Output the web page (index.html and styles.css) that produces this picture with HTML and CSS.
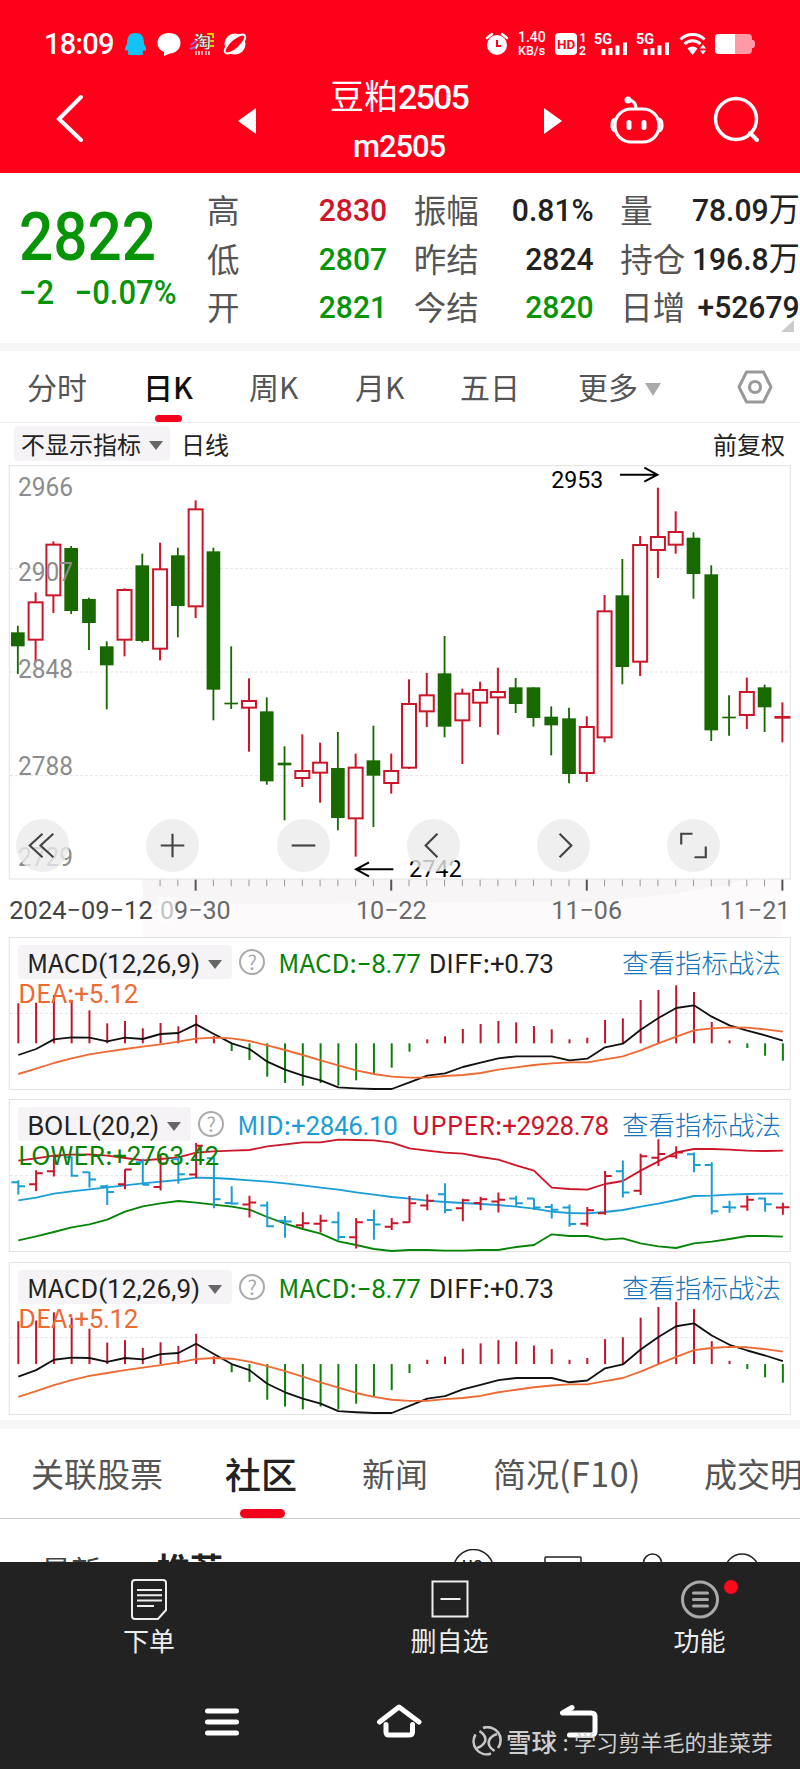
FILE: index.html
```html
<!DOCTYPE html>
<html lang="zh-CN">

<head>
    <meta charset="UTF-8">
    <meta name="viewport" content="width=device-width, initial-scale=1.0">
    <title>豆粕2505 - m2505</title>
    <link rel="stylesheet" href="styles.css">
</head>

<body>
    <header class="header">
        <div class="status-bar">
            <span class="clock">18:09</span>
            <svg class="status-left" width="130" height="30" viewBox="0 0 130 30">
                <path d="M6 15C6 7 9 4 14.500 4S23 7 23 15c2 3 2.500 5 1.500 7l-2-1-1 2.500c2 2 0 3-7 2.500-7 .5-9-.5-7-2.500L6.500 21l-2 1c-1-2-.5-4 1.500-7z" fill="#12c4f5"/>
                <path d="M48 4c7 0 11.500 4 11.500 10S55 24 49 24.500L43 27v-4c-4-1.500-6.500-5-6.500-9C36.500 8 41 4 48 4z" fill="#fff"/>
                <path d="M70 16l5-4M69 20l5-2" stroke="#a060e0" stroke-width="2"/>
                <path d="M86 5h6v4M89 12h4M89 17h4" fill="none" stroke="#ffc400" stroke-width="2"/>
                <text x="73" y="19" class="tao">淘</text>
                <path d="M75 22v4m3-4v4m3-4v4m4-4v4m3-4v4" stroke="#fff" stroke-width="1.300"/>
                <circle cx="114" cy="15" r="10.500" fill="#fff"/>
                <ellipse cx="114" cy="15" rx="13" ry="5" transform="rotate(-42 114 15)" fill="#ff001b" stroke="#fff" stroke-width="2"/>
            </svg>
            <span class="spacer"></span>
            <svg width="24" height="26" viewBox="0 0 24 26">
                <circle cx="12" cy="14" r="10" fill="#fff"/>
                <path d="M2 7l5-4M22 7l-5-4" stroke="#fff" stroke-width="2.500" stroke-linecap="round"/>
                <path d="M12 9v6h4" fill="none" stroke="#ff001b" stroke-width="2"/>
            </svg>
            <span class="speed">1.40<br><small>KB/s</small></span>
            <svg class="hd" width="34" height="26" viewBox="0 0 34 26">
                <rect x="1" y="2" width="22" height="22" rx="4" fill="#fff"/>
                <text x="3" y="18" class="hd-text">HD</text>
                <text x="25.500" y="11" class="hd-num">1</text>
                <text x="25" y="24" class="hd-num">2</text>
            </svg>
            <svg class="signal" width="34" height="26" viewBox="0 0 34 26">
                <text x="0" y="13" class="sig-text" textLength="18" lengthAdjust="spacingAndGlyphs">5G</text>
                <path d="M9.500 18v6M16.500 17v7M23.500 14.500v9.500M31 11.500v12.500" stroke="#fff" stroke-width="4"/>
            </svg>
            <svg class="signal" width="34" height="26" viewBox="0 0 34 26">
                <text x="0" y="13" class="sig-text" textLength="18" lengthAdjust="spacingAndGlyphs">5G</text>
                <path d="M9.500 18v6M16.500 17v7M23.500 14.500v9.500M31 11.500v12.500" stroke="#fff" stroke-width="4"/>
            </svg>
            <svg class="wifi" width="28" height="26" viewBox="0 0 28 26">
                <path d="M1.500 8.500a17 17 0 0 1 24 0M5.500 13a11.500 11.500 0 0 1 16 0" fill="none" stroke="#fff" stroke-width="3"/>
                <path d="M8.500 17.500a7 7 0 0 1 10 0L13.500 24z" fill="#fff"/>
                <path d="M21 17.500l3-4 3 4zM21 19.500l3 4 3-4z" fill="#fff"/>
            </svg>
            <svg width="40" height="22" viewBox="0 0 40 22">
                <rect x="0" y="1" width="37" height="20" rx="4" fill="#ff99a5"/>
                <path d="M37 7h1q2 0 2 4t-2 4h-1z" fill="#ff99a5"/>
                <path d="M4 1h16v20H4q-4 0-4-4V5q0-4 4-4z" fill="#fff"/>
            </svg>
        </div>
        <div class="nav-bar">
            <svg class="back" width="28" height="50" viewBox="0 0 28 50"><path d="M25 3L3 25l22 21" fill="none" stroke="#fff" stroke-width="4" stroke-linecap="round"/></svg>
            <svg class="prev" width="18" height="26" viewBox="0 0 18 26"><path d="M18 0v26L0 13z" fill="#fff"/></svg>
            <div class="title">
                <h1>豆粕<b>2505</b></h1>
                <p>m2505</p>
            </div>
            <svg class="next" width="18" height="26" viewBox="0 0 18 26"><path d="M0 0v26l18-13z" fill="#fff"/></svg>
            <svg class="robot" width="54" height="50" viewBox="0 0 54 50">
                <g fill="none" stroke="#fff" stroke-width="3.200">
                    <rect x="5" y="14" width="44" height="33" rx="16"/>
                    <path d="M5 24Q2 25 2 30t3 6M49 24q3 1 3 6t-3 6M26 14q0-8-7-9"/>
                </g>
                <circle cx="18" cy="5" r="3.500" fill="#fff"/>
                <path d="M19 27.500v5M34 27.500v5" stroke="#fff" stroke-width="5" stroke-linecap="round"/>
            </svg>
            <svg class="search" width="48" height="48" viewBox="0 0 48 48"><circle cx="23" cy="23" r="20.500" fill="none" stroke="#fff" stroke-width="3.500"/><path d="M37 37l7 7" stroke="#fff" stroke-width="4" stroke-linecap="round"/></svg>
        </div>
    </header>

    <section class="quote">
        <div class="price">
            <div class="last">2822</div>
            <div class="change"><span>−2</span><span>−0.07%</span></div>
        </div>
        <dl class="stats">
            <dt>高</dt><dd class="up">2830</dd>
            <dt>低</dt><dd class="down">2807</dd>
            <dt>开</dt><dd class="down">2821</dd>
        </dl>
        <dl class="stats">
            <dt>振幅</dt><dd>0.81%</dd>
            <dt>昨结</dt><dd>2824</dd>
            <dt>今结</dt><dd class="down">2820</dd>
        </dl>
        <dl class="stats">
            <dt>量</dt><dd>78.09<i>万</i></dd>
            <dt>持仓</dt><dd>196.8<i>万</i></dd>
            <dt>日增</dt><dd>+52679</dd>
        </dl>
        <span class="corner"></span>
    </section>

    <nav class="period-tabs">
        <a>分时</a>
        <a class="active">日K</a>
        <a>周K</a>
        <a>月K</a>
        <a>五日</a>
        <a>更多<span class="caret light"></span></a>
        <svg width="36" height="34" viewBox="0 0 36 34">
            <path d="M9.500 2h17L34 17l-7.500 15h-17L2 17z" fill="none" stroke="#999" stroke-width="3" stroke-linejoin="round"/>
            <circle cx="18" cy="17" r="5.500" fill="none" stroke="#999" stroke-width="3.200"/>
        </svg>
    </nav>

    <div class="chart-bar">
        <span class="chip">不显示指标<i class="caret"></i></span>
        <span>日线</span>
        <span class="adjust">前复权</span>
    </div>

    <div class="kline">
        <!-- all charts are drawn in 3x units, 2400 wide -->
        <svg id="kline" width="800" height="472" viewBox="0 14 2400 1416"></svg>
        <div class="controls">
            <button><svg viewBox="0 0 54 54"><path d="M27 15L14 27l13 12M38 15L25 27l13 12"/></svg></button>
            <button><svg viewBox="0 0 54 54"><path d="M15 27h24M27 15v24"/></svg></button>
            <button><svg viewBox="0 0 54 54"><path d="M15 27h24"/></svg></button>
            <button><svg viewBox="0 0 54 54"><path d="M31 15L19 27l12 12"/></svg></button>
            <button><svg viewBox="0 0 54 54"><path d="M23 15l12 12-12 12"/></svg></button>
            <button><svg viewBox="0 0 54 54"><path d="M14.500 26V15H26M39.500 28v11H28"/></svg></button>
        </div>
    </div>

    <section class="indicator">
        <svg id="macd1" width="800" height="153" viewBox="0 21 2400 459"></svg>
        <div class="legend">
            <span class="chip">MACD<b>(12,26,9)</b><i class="caret"></i></span>
            <span class="help">?</span>
            <span class="green">MACD:<b>−8.77</b></span>
            <span class="diff">DIFF:<b>+0.73</b></span>
            <a>查看指标战法</a>
        </div>
        <div class="legend-second orange">DEA:<b>+5.12</b></div>
    </section>

    <section class="indicator">
        <svg id="boll" width="800" height="153" viewBox="0 508 2400 459"></svg>
        <div class="legend">
            <span class="chip">BOLL<b>(20,2)</b><i class="caret"></i></span>
            <span class="help">?</span>
            <span class="blue">MID:<b>+2846.10</b></span>
            <span class="upper">UPPER:<b>+2928.78</b></span>
            <a>查看指标战法</a>
        </div>
        <div class="legend-second green">LOWER:<b>+2763.42</b></div>
    </section>

    <section class="indicator">
        <svg id="macd2" width="800" height="153" viewBox="0 21 2400 459"></svg>
        <div class="legend">
            <span class="chip">MACD<b>(12,26,9)</b><i class="caret"></i></span>
            <span class="help">?</span>
            <span class="green">MACD:<b>−8.77</b></span>
            <span class="diff">DIFF:<b>+0.73</b></span>
            <a>查看指标战法</a>
        </div>
        <div class="legend-second orange">DEA:<b>+5.12</b></div>
    </section>

    <nav class="content-tabs">
        <a>关联股票</a>
        <a class="active">社区</a>
        <a>新闻</a>
        <a>简况<span class="latin">(F10)</span></a>
        <a>成交明细</a>
    </nav>

    <div class="feed-tabs">
        <a>最新</a>
        <a class="active">推荐</a>
        <svg width="320" height="40" viewBox="0 0 320 40" fill="none" stroke="#222" stroke-width="1.500">
            <circle cx="23.500" cy="20.500" r="20"/>
            <text x="12" y="22" class="hq">HQ</text>
            <rect x="95" y="8" width="36" height="28" rx="1"/>
            <circle cx="202.500" cy="14" r="9"/>
            <circle cx="292" cy="22" r="17"/>
        </svg>
    </div>

    <footer class="footer">
        <div class="actions">
            <a>
                <svg width="40" height="44" viewBox="0 0 40 44" fill="none" stroke="#eee" stroke-width="2">
                    <path d="M6 3h28q3 0 3 3v27l-8 9H6q-3 0-3-3V6q0-3 3-3z"/>
                    <path d="M8 13h25M8 18.300h25M8 23.600h25M8 29h17"/>
                </svg>
                下单
            </a>
            <a>
                <svg width="40" height="44" viewBox="0 0 40 44" fill="none" stroke="#eee" stroke-width="2">
                    <rect x="2.500" y="4.500" width="35" height="35"/>
                    <path d="M10.500 22h20"/>
                </svg>
                删自选
            </a>
            <a>
                <svg width="40" height="44" viewBox="0 0 40 44" fill="none" stroke="#aaa" stroke-width="3">
                    <circle cx="20" cy="22.500" r="17.500"/>
                    <path d="M13.500 16h14M13.500 22.500h14M13.500 29h14" stroke-linecap="round"/>
                </svg>
                功能
                <span class="dot"></span>
            </a>
        </div>
        <div class="system-nav">
            <svg width="36" height="34" viewBox="0 0 36 34"><path d="M3.500 6h29M3.500 17h29M3.500 28h29"/></svg>
            <svg width="46" height="38" viewBox="0 0 46 38"><path d="M3.500 19L23 4l20 15M10 21.500V29q0 3 3 3h20q3.500 0 3.500-3v-7.500"/></svg>
            <svg width="42" height="38" viewBox="0 0 42 38"><path d="M14 4.500L4.500 10H33q4 0 4 3.500v15q0 3.500-4 3.500H11.500"/></svg>
        </div>
        <div class="watermark">
            <svg width="30" height="30" viewBox="0 0 30 30" fill="none" stroke="#c6c6c6" stroke-width="2.600">
                <path d="M11 2a13 13 0 0 1 15 20M19 27.500A13 13 0 0 1 3.500 8.500"/>
                <path d="M7.500 5Q15 10 13 15.500 11 20 5 22M22.500 25Q15 20 17 14.500 19 10 25 8"/>
            </svg>
            <b>雪球</b><i>:</i><span>学习剪羊毛的韭菜芽</span>
        </div>
    </footer>

    <script src="chart.js"></script>
</body>

</html>
```

FILE: styles.css
```css
* {
    margin: 0;
    padding: 0;
    box-sizing: border-box;
}

body {
    width: 800px;
    height: 1769px;
    overflow: hidden;
    background: #fff;
    color: #222;
    font-family: "Noto Sans CJK SC", sans-serif;
    font-weight: 400;
}

svg {
    display: block;
    flex-shrink: 0;
}

i {
    font-style: normal;
}

/* header */
.header {
    height: 173px;
    background: #ff001b;
    color: #fff;
}

.status-bar {
    display: flex;
    align-items: center;
    height: 88px;
    padding: 0 45px 0 44px;
}

.clock {
    width: 77px;
    font: 500 29px/30px Roboto, sans-serif;
    letter-spacing: -0.8px;
}

.tao {
    font: 700 17px "Noto Sans CJK SC", sans-serif;
    fill: #fff;
    stroke: #4b2a10;
    stroke-width: 0.4px;
}

.spacer {
    flex: 1;
}

.speed {
    margin-left: 9px;
    width: 29px;
    font: 500 14px/12.5px Roboto, sans-serif;
    white-space: nowrap;
}

.speed small {
    font-size: 12.5px;
}

.hd {
    margin-left: 7px;
}

.hd-text {
    font: 700 13.5px Roboto, sans-serif;
    fill: #ff001b;
}

.hd-num {
    font: 700 12px Roboto, sans-serif;
    fill: #fff;
}

.sig-text {
    font: 700 14px Roboto, sans-serif;
    fill: #fff;
}

.signal {
    margin-left: 6px;
    margin-right: 2px;
}

.wifi {
    margin: 0 8px 0 7px;
}

.nav-bar {
    display: flex;
    align-items: center;
    height: 62px;
}

.back {
    margin-left: 56px;
}

.prev {
    margin-left: 154px;
    margin-top: 3px;
}

.title {
    width: 288px;
    margin-top: 3px;
    padding-right: 2px;
    text-align: center;
}

.title h1 {
    font-weight: 400;
    font-size: 34px;
    line-height: 50px;
}

.title b {
    font: 500 34px/40px Roboto, sans-serif;
    letter-spacing: -1.8px;
}

.title p {
    padding-top: 3px;
    font: 500 31px/48px Roboto, sans-serif;
    letter-spacing: -1.1px;
}

.next {
    margin-top: 3px;
}

.robot {
    margin-left: 48px;
    margin-top: 2px;
}

.search {
    margin-left: 49px;
    margin-top: 2px;
}

/* quote */
.quote {
    position: relative;
    display: flex;
    gap: 28px;
    height: 178px;
    padding: 13px 0 0 20px;
    border-bottom: 8px solid #f6f6f6;
}

.price {
    width: 160px;
    color: #079407;
    white-space: nowrap;
}

.last {
    margin: 19px 0 0 -1px;
    font: 500 67px/64px Roboto, sans-serif;
    transform: scaleX(0.9);
    transform-origin: left;
}

.change {
    display: flex;
    gap: 22px;
    margin: 4px 0 0 -1px;
    font: 500 33px/40px Roboto, sans-serif;
    transform: scaleX(0.94);
    transform-origin: left;
}

.stats {
    display: grid;
    grid-template-columns: auto 1fr;
    grid-auto-rows: 48.5px;
    width: 179px;
    align-items: center;
    white-space: nowrap;
}

.stats dt {
    margin: -3px 0 0 -1px;
    font-size: 32.5px;
    color: #555;
}

.stats dd {
    text-align: right;
    font: 500 32px/48px Roboto, sans-serif;
    color: #222;
    transform: scaleX(0.94);
    transform-origin: right;
}

.stats i {
    font: 400 33px/40px "Noto Sans CJK SC", sans-serif;
}

.stats .up {
    color: #d0152b;
}

.stats .down {
    color: #079407;
}

.corner {
    position: absolute;
    left: 781px;
    top: 147px;
    border-left: 13px solid transparent;
    border-bottom: 12px solid #ccc;
}

/* period tabs */
.period-tabs {
    display: grid;
    grid-template-columns: 116px 106px 106px 105px 118px 159px auto;
    align-items: center;
    height: 72px;
    padding-left: 27px;
    border-bottom: 1px solid #eee;
    font-size: 30px;
    color: #555;
}

.period-tabs a {
    position: relative;
    height: 71px;
    line-height: 71px;
    white-space: nowrap;
}

.period-tabs .active {
    color: #111;
    font-weight: 500;
}

.period-tabs .active::after {
    content: "";
    position: absolute;
    left: 12px;
    bottom: 0;
    width: 27px;
    height: 7px;
    border-radius: 4px;
    background: #f5001b;
}

.caret {
    display: inline-block;
    margin-left: 8px;
    border: 7px solid transparent;
    border-top: 9px solid #666;
    border-bottom: 0;
    vertical-align: 4px;
}

.caret.light {
    margin-left: 7px;
    border-width: 13px 8px 0;
    border-top-color: #aaa;
    vertical-align: 3px;
}

.chart-bar {
    display: flex;
    align-items: center;
    height: 42px;
    padding: 0 15px 0 14px;
    font-size: 24px;
}

.chart-bar span {
    margin-top: -1px;
}

.chip {
    height: 35px;
    padding: 0 7px;
    border-radius: 4px;
    background: #f5f3f5;
    line-height: 35px;
    white-space: nowrap;
}

.chart-bar .chip {
    margin-right: 11px;
}

.chart-bar .adjust {
    margin-left: auto;
}

/* k line */
.kline {
    position: relative;
    height: 472px;
}

.controls {
    position: absolute;
    left: 16px;
    top: 354px;
    display: flex;
    gap: 77.3px;
}

.controls button {
    width: 53px;
    height: 53px;
    border: 0;
    border-radius: 50%;
    background: rgba(235, 235, 235, 0.8);
}

.controls path {
    fill: none;
    stroke: #444;
    stroke-width: 2.2;
}

.frame {
    fill: none;
    stroke: #e2e2e2;
    stroke-width: 3;
}

.grid {
    stroke: #e4e4e4;
    stroke-width: 3;
    stroke-dasharray: 9 6;
}

.candle-up {
    fill: #fff;
    stroke: #cc1529;
    stroke-width: 6;
}

.wick-down {
    stroke: #186a00;
    stroke-width: 5.5;
}

.candle-down {
    fill: #186a00;
}

.price-label {
    font: 400 78px Roboto, sans-serif;
    fill: #8c8c8c;
}

.date-label {
    font: 400 79px Roboto, sans-serif;
    fill: #6a6a6a;
}

.date-label.first {
    fill: #444;
}

.mark {
    font: 400 71px Roboto, sans-serif;
    fill: #000;
}

.arrow {
    fill: none;
    stroke: #000;
    stroke-width: 6;
}

.axis-shade {
    fill: #fcfafb;
}

.tick {
    stroke: #999;
    stroke-width: 3;
}

.tick-major {
    stroke: #555;
    stroke-width: 6;
}

/* indicators */
.indicator {
    position: relative;
    height: 153px;
    margin-bottom: 9.3px;
    padding-top: 8px;
    font-size: 26px;
    line-height: 34px;
}

.indicator > svg {
    position: absolute;
    left: 0;
    top: 0;
}

.legend {
    position: relative;
    display: flex;
    align-items: center;
    height: 34px;
    margin: 0 19px 0 18px;
    white-space: nowrap;
}

.legend .chip {
    height: 34px;
    padding: 0 10px 0 9px;
    line-height: 34px;
}

.indicator b {
    font: 400 26px/30px Roboto, sans-serif;
    letter-spacing: -0.35px;
}

.indicator .chip b {
    letter-spacing: 0.1px;
}

.help {
    width: 26px;
    height: 26px;
    margin: 0 13px 0 7px;
    border: 2px solid #aaa;
    border-radius: 50%;
    color: #aaa;
    font-size: 20px;
    line-height: 22px;
    text-align: center;
}

.diff {
    margin-left: 8px;
}

.upper {
    margin-left: 14px;
    color: #cc1529;
}

.legend a {
    margin-left: auto;
    font-size: 26.5px;
    font-weight: 300;
    color: #1474bd;
}

.legend-second {
    position: relative;
    margin: -4px 0 0 18px;
}

.green {
    color: #078407;
}

.orange {
    color: #ee6a33;
}

.blue {
    color: #1b9dd6;
}

.line {
    fill: none;
    stroke-width: 5.5;
    stroke-linejoin: round;
}

.bar-up {
    stroke: #c01530;
    stroke-width: 6;
}

.bar-down {
    stroke: #0a800a;
    stroke-width: 6;
}

.ohlc {
    fill: none;
    stroke-width: 6;
}

/* community */
.content-tabs {
    display: grid;
    grid-template-columns: 194px 137px 131px 211px 200px;
    height: 99px;
    margin-top: -4px;
    padding-left: 31px;
    border-top: 9px solid #f6f6f6;
    border-bottom: 1px solid #ccc;
    font-size: 33px;
    line-height: 88px;
    color: #555;
    white-space: nowrap;
    overflow: hidden;
}

.content-tabs .latin {
    font-size: 34px;
    letter-spacing: 0.5px;
}

.content-tabs .active {
    position: relative;
    color: #222;
    font-size: 36px;
    font-weight: 500;
}

.content-tabs .active::after {
    content: "";
    position: absolute;
    left: 15px;
    bottom: 0;
    width: 45px;
    height: 9px;
    border-radius: 5px;
    background: #f5001b;
}

.feed-tabs {
    display: flex;
    height: 43px;
    padding: 30px 0 0 41px;
    overflow: hidden;
    font-size: 30px;
    line-height: 44px;
    color: #444;
}

.feed-tabs a {
    margin-top: -2px;
}

.feed-tabs .active {
    margin: -3px 0 0 56px;
    font-size: 33px;
    font-weight: 700;
    color: #222;
}

.feed-tabs svg {
    margin-left: 227px;
}

.hq {
    font: 500 15px Roboto, sans-serif;
    fill: #222;
    stroke: none;
}

/* footer */
.footer {
    position: relative;
    height: 207px;
    background: #222;
    color: #eee;
}

.actions {
    display: grid;
    grid-template-columns: 298px 303px 197px;
    padding-top: 15px;
    font-size: 26px;
    line-height: 38px;
}

.actions a {
    position: relative;
    display: flex;
    flex-direction: column;
    align-items: center;
}

.dot {
    position: absolute;
    left: 123px;
    top: 3px;
    width: 14px;
    height: 14px;
    border-radius: 50%;
    background: #ff0a1c;
}

.system-nav {
    display: flex;
    align-items: center;
    gap: 136px;
    margin-top: 44px;
    padding-left: 204px;
    fill: none;
    stroke: #fff;
    stroke-width: 5;
    stroke-linecap: round;
    stroke-linejoin: round;
}

.watermark {
    position: absolute;
    left: 472px;
    top: 164px;
    display: flex;
    align-items: center;
    height: 30px;
    color: #cfcfcf;
    font-size: 22.1px;
    white-space: nowrap;
}

.watermark b {
    margin-left: 4px;
    font-size: 25.5px;
    font-weight: 500;
}

.watermark i {
    width: 17px;
    text-align: center;
}
```

FILE: chart.js
```javascript
const NS = 'http://www.w3.org/2000/svg';
const X0 = 53.5;
const STEP = 53.34;

// [direction, high, low, body top, body bottom]
const candles = [
    ['g', 496, 641, 516, 558], ['r', 396, 606, 426, 538], ['r', 243, 458, 253, 405], ['g', 257, 461, 263, 452],
    ['g', 412, 569, 416, 488], ['g', 543, 747, 558, 615], ['r', 384, 588, 389, 538], ['g', 280, 546, 315, 542],
    ['r', 247, 600, 327, 565], ['g', 262, 531, 285, 437], ['r', 120, 473, 147, 438], ['g', 262, 780, 273, 688],
    ['g', 558, 746, 727, 732], ['r', 654, 874, 722, 742], ['g', 711, 973, 753, 963], ['g', 858, 1080, 907, 915],
    ['r', 822, 980, 932, 953], ['r', 847, 1027, 907, 937], ['g', 815, 1110, 923, 1073], ['r', 880, 1189, 922, 1074],
    ['g', 796, 1100, 900, 946], ['r', 880, 1000, 932, 968], ['r', 657, 926, 731, 922], ['r', 638, 800, 705, 753],
    ['g', 527, 831, 639, 799], ['r', 685, 911, 700, 780], ['r', 664, 800, 689, 727], ['r', 622, 823, 695, 711],
    ['g', 653, 758, 681, 731], ['g', 681, 799, 681, 773], ['g', 738, 885, 769, 795], ['g', 742, 969, 774, 941],
    ['r', 768, 965, 800, 938], ['r', 404, 846, 453, 831], ['g', 296, 672, 405, 620], ['r', 227, 647, 254, 604],
    ['r', 82, 353, 230, 269], ['r', 153, 280, 215, 253], ['g', 216, 415, 232, 341], ['g', 315, 842, 342, 810],
    ['g', 705, 826, 769, 774], ['r', 652, 806, 695, 764], ['g', 673, 815, 681, 741], ['r', 726, 846, 770, 772]
];

const macdBars = [220, 218, 195, 210, 241, 280, 273, 295, 279, 289, 255, 318, 363, 390, 440, 459, 467, 459, 467, 451, 430, 413,
    365, 328, 319, 297, 282, 273, 277, 288, 298, 328, 323, 270, 265, 210, 180, 166, 186, 276, 331, 354, 377, 392];
const diff = [375, 357, 328, 322, 323, 334, 323, 327, 312, 309, 283, 312, 340, 357, 395, 419, 437, 451, 472, 475, 477, 477,
    457, 437, 430, 411, 398, 385, 379, 379, 379, 391, 386, 352, 341, 299, 264, 234, 226, 260, 286, 302, 316, 332];
const dea = [432, 416, 399, 385, 373, 365, 357, 350, 343, 335, 326, 323, 325, 333, 346, 360, 375, 391, 406, 421, 432, 440,
    443, 443, 438, 435, 429, 419, 412, 405, 400, 397, 397, 388, 379, 361, 340, 320, 301, 295, 292, 293, 298, 305];

const upper = [693, 686, 678, 675, 674, 678, 685, 692, 688, 683, 669, 665, 663, 661, 650, 644, 638, 638, 630, 631, 632, 639,
    656, 663, 669, 672, 682, 690, 707, 723, 774, 778, 780, 763, 754, 723, 695, 668, 658, 658, 660, 663, 664, 663];
const mid = [812, 804, 792, 785, 779, 773, 767, 761, 756, 751, 744, 745, 748, 752, 756, 761, 767, 774, 780, 788, 795, 802,
    807, 813, 817, 820, 823, 826, 831, 837, 846, 850, 851, 847, 841, 831, 822, 811, 799, 798, 795, 793, 792, 792];
const lower = [932, 920, 907, 893, 884, 870, 846, 830, 821, 814, 819, 825, 831, 840, 862, 882, 898, 912, 935, 946, 958, 964,
    961, 961, 963, 963, 961, 961, 952, 946, 914, 919, 919, 930, 926, 941, 950, 955, 941, 936, 928, 919, 919, 921];

function add(svg, tag, attrs, text) {
    const el = document.createElementNS(NS, tag);
    for (const key in attrs) el.setAttribute(key, attrs[key]);
    if (text) el.textContent = text;
    svg.appendChild(el);
    return el;
}

function addText(svg, cls, x, y, width, text) {
    add(svg, 'text', { class: cls, x: x, y: y, textLength: width, lengthAdjust: 'spacingAndGlyphs' }, text);
}

function xAt(i) {
    return X0 + STEP * i;
}

function addLine(svg, values, color) {
    const points = values.map((v, i) => `${xAt(i) + 1.5},${v}`).join(' ');
    add(svg, 'polyline', { class: 'line', points: points, stroke: color });
}

function drawKline() {
    const svg = document.getElementById('kline');

    add(svg, 'path', { class: 'axis-shade', d: 'M428 1257H2342V1430H428z' });
    add(svg, 'path', { d: 'M428 1257H2240Q2100 1300 1800 1322L430 1335z', fill: '#f7f5f6' });
    add(svg, 'rect', { class: 'frame', x: 28, y: 16, width: 2343, height: 1240 });
    [325, 635, 946].forEach(y => add(svg, 'path', { class: 'grid', d: `M30 ${y}H2370` }));

    candles.forEach(([dir, high, low, top, bottom], i) => {
        const x = xAt(i);
        if (dir === 'r') {
            add(svg, 'path', { class: 'candle-up', d: `M${x} ${high}V${low}` });
            add(svg, 'rect', { class: 'candle-up', x: x - 21, y: top, width: 42, height: bottom - top });
        } else {
            add(svg, 'path', { class: 'wick-down', d: `M${x} ${high}V${low}` });
            add(svg, 'rect', { class: 'candle-down', x: x - 20.5, y: top, width: 41, height: bottom - top });
        }
    });

    for (let i = 8; i < candles.length; i++) {
        const major = i % 11 === 10;
        add(svg, 'path', { class: major ? 'tick-major' : 'tick', d: `M${xAt(i)} 1258V${major ? 1291 : 1278}` });
    }

    addText(svg, 'price-label', 54, 108, 165, '2966');
    addText(svg, 'price-label', 54, 362, 165, '2907');
    addText(svg, 'price-label', 54, 654, 165, '2848');
    addText(svg, 'price-label', 54, 945, 165, '2788');
    addText(svg, 'price-label', 54, 1218, 165, '2729');

    addText(svg, 'mark', 1654, 84, 156, '2953');
    add(svg, 'path', { class: 'arrow', d: 'M1860 43H1972M1933 22L1972 43L1933 64' });
    addText(svg, 'mark', 1227, 1251, 158, '2742');
    add(svg, 'path', { class: 'arrow', d: 'M1180 1227H1068M1107 1206L1068 1227L1107 1248' });

    addText(svg, 'date-label first', 28, 1376, 430, '2024−09−12');
    addText(svg, 'date-label', 480, 1376, 212, '09−30');
    addText(svg, 'date-label', 1068, 1376, 212, '10−22');
    addText(svg, 'date-label', 1654, 1376, 212, '11−06');
    addText(svg, 'date-label', 2159, 1376, 212, '11−21');
    add(svg, 'rect', { x: 470, y: 1310, width: 50, height: 75, fill: '#fff', opacity: 0.6 });
}

function drawMacd(id, gridY, scaleY) {
    const svg = document.getElementById(id);
    add(svg, 'rect', { class: 'frame', x: 28, y: 22.5, width: 2343, height: 456 });
    add(svg, 'path', { class: 'grid', d: `M30 ${gridY}H2370` });
    macdBars.forEach((v, i) => {
        add(svg, 'path', { class: v < 340 ? 'bar-up' : 'bar-down', d: `M${xAt(i) + 1.5} ${scaleY(340)}V${scaleY(v)}` });
    });
    addLine(svg, diff.map(scaleY), '#111');
    addLine(svg, dea.map(scaleY), '#ee6a33');
}

function drawBoll() {
    const svg = document.getElementById('boll');
    const toBoll = y => 629 + (y - 82) * 0.296;
    add(svg, 'rect', { class: 'frame', x: 28, y: 509.5, width: 2343, height: 456 });
    add(svg, 'path', { class: 'grid', d: 'M30 738H2370' });
    addLine(svg, upper, '#cc1529');
    addLine(svg, mid, '#1b9dd6');
    addLine(svg, lower, '#078407');
    candles.forEach(([dir, high, low, top, bottom], i) => {
        const x = xAt(i) + 1.5;
        const open = toBoll(dir === 'r' ? bottom : top);
        const close = toBoll(dir === 'r' ? top : bottom);
        add(svg, 'path', {
            class: 'ohlc',
            stroke: dir === 'r' ? '#cc1529' : '#1b9dd6',
            d: `M${x} ${toBoll(high)}V${toBoll(low)}M${x - 21} ${open}H${x}M${x} ${close}H${x + 20}`
        });
    });
}

drawKline();
drawMacd('macd1', 250, y => y);
drawBoll();
drawMacd('macd2', 248, y => 475 + (y - 478) * 1.071);
```
